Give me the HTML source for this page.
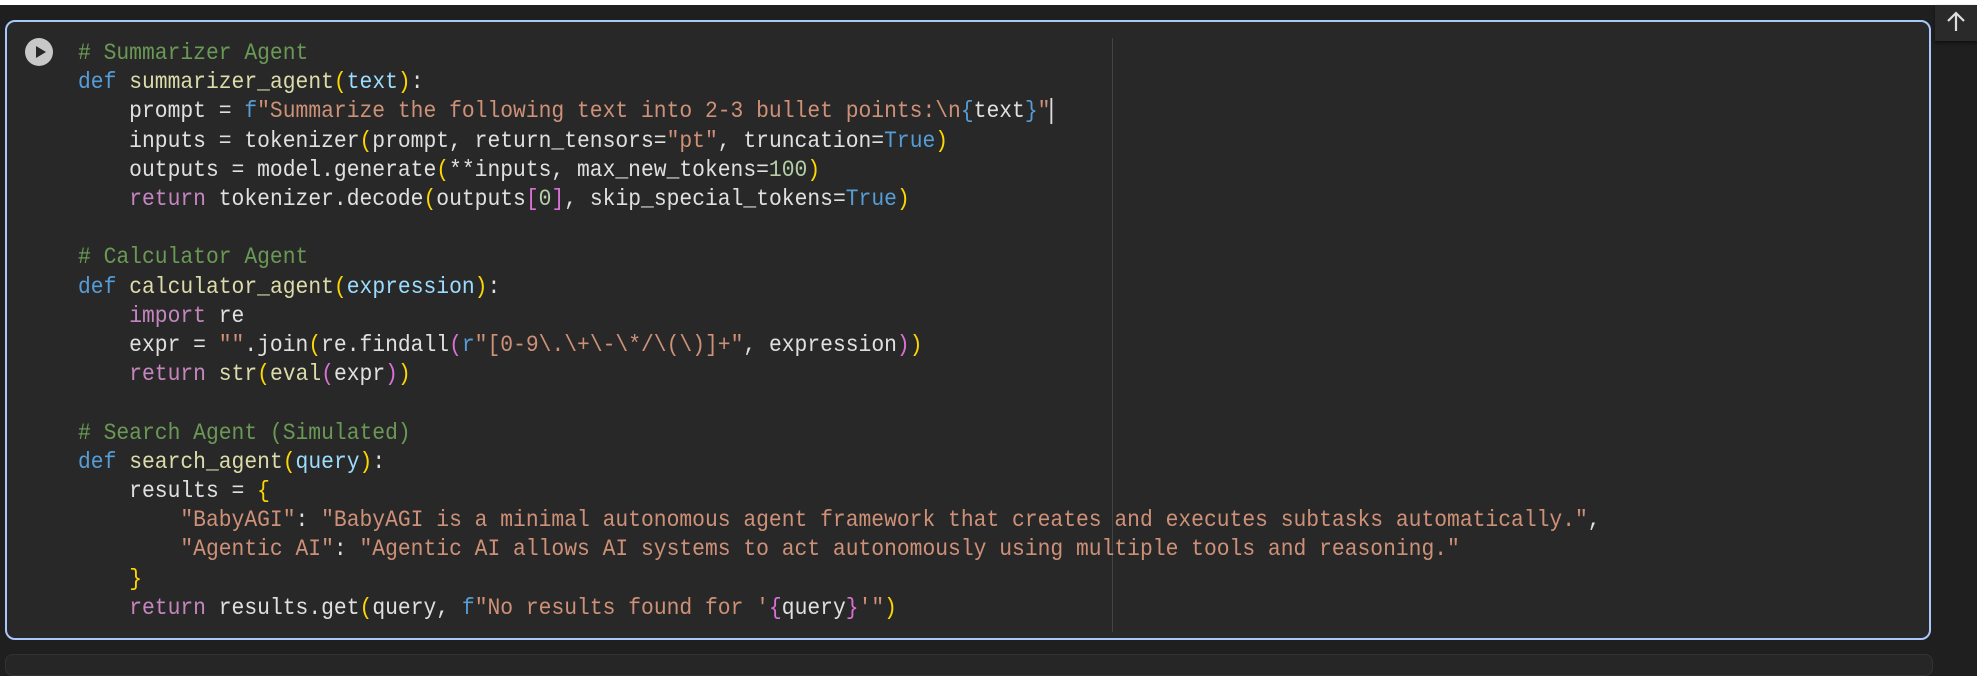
<!DOCTYPE html>
<html><head><meta charset="utf-8"><style>
html,body{margin:0;padding:0}
body{width:1977px;height:659px;background:#1f1f1f;position:relative;overflow:hidden}
.top{position:absolute;left:0;top:0;width:1977px;height:5px;background:#fff}
.cell{position:absolute;left:5px;top:20px;width:1926px;height:620px;border:2px solid #a8c7fa;border-radius:10px;background:#282828;box-sizing:border-box}
.up{position:absolute;left:1935px;top:5px;width:42px;height:36px;background:#2a2a2a;box-shadow:0 2px 3px #111}
.ruler{position:absolute;left:1112px;top:38px;width:1px;height:594px;background:#444}
.play{position:absolute;left:25px;top:38px;width:28px;height:28px;border-radius:50%;background:#c8c8c8}
pre{position:absolute;left:78px;top:39px;margin:0;font-family:"Liberation Mono",monospace;font-size:23px;line-height:29.2px;color:#e0e0e0;white-space:pre;transform:scaleX(0.927);transform-origin:0 0}
.c{color:#6a9955}.k{color:#569cd6}.f{color:#dcdcaa}.p{color:#9cdcfe}.s{color:#ce9178}.y{color:#ffd700}.r{color:#c586c0}.m{color:#da70d6}.n{color:#b5cea8}
.cur{display:inline-block;width:2px;height:26px;background:#ddd;vertical-align:middle}
.next{position:absolute;left:5px;top:654px;width:1926px;height:20px;border:1px solid #333;border-radius:8px;background:#262626}
</style></head><body>
<div class="top"></div>
<div class="cell"></div>
<div class="next"></div>
<div class="up"><svg width="42" height="36"><path d="M21 26V8M13 16l8-8 8 8" stroke="#ddd" stroke-width="2.2" fill="none"/></svg></div>
<div class="ruler"></div>
<div class="play"><svg width="28" height="28"><path d="M11 8l10 6-10 6z" fill="#282828"/></svg></div>
<pre><span class="c"># Summarizer Agent</span>
<span class="k">def</span> <span class="f">summarizer_agent</span><span class="y">(</span><span class="p">text</span><span class="y">)</span>:
    prompt = <span class="k">f</span><span class="s">"Summarize the following text into 2-3 bullet points:\n</span><span class="k">{</span>text<span class="k">}</span><span class="s">"</span><span class="cur"></span>
    inputs = tokenizer<span class="y">(</span>prompt, return_tensors=<span class="s">"pt"</span>, truncation=<span class="k">True</span><span class="y">)</span>
    outputs = model.generate<span class="y">(</span>**inputs, max_new_tokens=<span class="n">100</span><span class="y">)</span>
    <span class="r">return</span> tokenizer.decode<span class="y">(</span>outputs<span class="m">[</span><span class="n">0</span><span class="m">]</span>, skip_special_tokens=<span class="k">True</span><span class="y">)</span>

<span class="c"># Calculator Agent</span>
<span class="k">def</span> <span class="f">calculator_agent</span><span class="y">(</span><span class="p">expression</span><span class="y">)</span>:
    <span class="r">import</span> re
    expr = <span class="s">""</span>.join<span class="y">(</span>re.findall<span class="m">(</span><span class="k">r</span><span class="s">"[0-9\.\+\-\*/\(\)]+"</span>, expression<span class="m">)</span><span class="y">)</span>
    <span class="r">return</span> <span class="f">str</span><span class="y">(</span><span class="f">eval</span><span class="m">(</span>expr<span class="m">)</span><span class="y">)</span>

<span class="c"># Search Agent (Simulated)</span>
<span class="k">def</span> <span class="f">search_agent</span><span class="y">(</span><span class="p">query</span><span class="y">)</span>:
    results = <span class="y">{</span>
        <span class="s">"BabyAGI"</span>: <span class="s">"BabyAGI is a minimal autonomous agent framework that creates and executes subtasks automatically."</span>,
        <span class="s">"Agentic AI"</span>: <span class="s">"Agentic AI allows AI systems to act autonomously using multiple tools and reasoning."</span>
    <span class="y">}</span>
    <span class="r">return</span> results.get<span class="y">(</span>query, <span class="k">f</span><span class="s">"No results found for '</span><span class="m">{</span>query<span class="m">}</span><span class="s">'"</span><span class="y">)</span></pre>
</body></html>
